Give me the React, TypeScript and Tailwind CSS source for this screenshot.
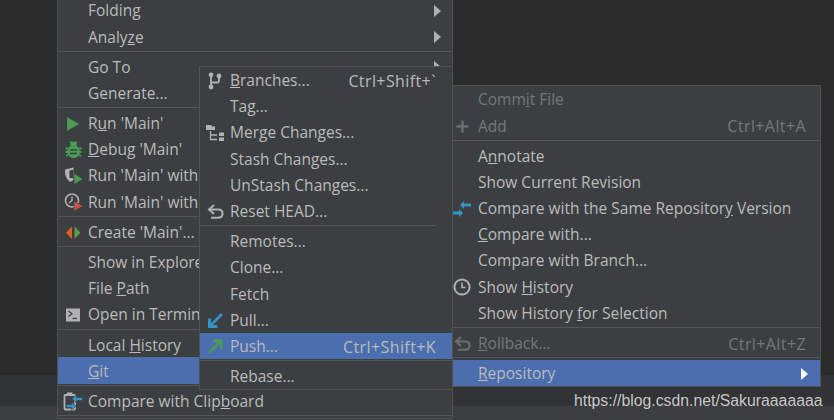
import React from 'react';

// Small inline icons, drawn to the sizes seen in the menus
const Svg = ({ children, w = 16, h = 16 }: { children: React.ReactNode; w?: number; h?: number }) => (
  <svg width={w} height={h} viewBox={`0 0 ${w} ${h}`} fill="none" className="shrink-0">
    {children}
  </svg>
);

const Play = () => (
  <Svg><path d="M2 1 L14 8 L2 15 Z" fill="#499c54" /></Svg>
);

const Bug = () => (
  <Svg w={17} h={18}>
    <ellipse cx="8.5" cy="10.5" rx="6" ry="6.8" fill="#499c54" />
    <circle cx="8.5" cy="3.5" r="3" fill="#499c54" />
    <path d="M5.5 0.5 L6.5 3 M11.5 0.5 L10.5 3 M0.5 7.5 H3 M14 7.5 H16.5 M0.5 11 H3 M14 11 H16.5 M1 15 L3.5 13.5 M16 15 L13.5 13.5" stroke="#499c54" strokeWidth="1.8" />
    <path d="M5 9 H12 M5 12.5 H12" stroke="#3c3f41" strokeWidth="1.4" />
  </Svg>
);

const Coverage = () => (
  <Svg w={19} h={18}>
    <path d="M1 2.5 L9.5 0.5 V13 L6 15 C3 12.5 1 9.5 1 5.5 Z" fill="#afb1b3" />
    <path d="M5.5 3.5 L9.5 2.8 V11 H5.5 Z" fill="#3c3f41" />
    <path d="M10 6.5 L19 12 L10 17.5 Z" fill="#499c54" stroke="#3c3f41" strokeWidth="0.6" />
  </Svg>
);

const Profiler = () => (
  <Svg w={19} h={18}>
    <circle cx="8" cy="7.5" r="6.5" stroke="#afb1b3" strokeWidth="1.6" />
    <path d="M8 3.5 V7.5 L5 10" stroke="#afb1b3" strokeWidth="1.4" />
    <path d="M10 8 L19 13 L10 18 Z" fill="#c75450" stroke="#3c3f41" strokeWidth="0.6" />
  </Svg>
);

const CreateMain = () => (
  <Svg>
    <path d="M7 1.5 V14 L1 7.8 Z" fill="#e05f25" />
    <path d="M9.5 1.5 V14 L15.5 7.8 Z" fill="#5aa146" />
  </Svg>
);

const Terminal = () => (
  <Svg>
    <rect x="1" y="1.5" width="14" height="13" fill="#afb1b3" />
    <path d="M3.5 4 L7 6.8 L3.5 9.5" stroke="#3c3f41" strokeWidth="1.2" />
    <path d="M7.5 11.5 H12" stroke="#3c3f41" strokeWidth="1.2" />
  </Svg>
);

const CompareBlue = () => (
  <Svg w={18} h={16}>
    <path d="M7 4 L11 0 V2.5 H18 V5.5 H11 V8 Z" fill="#3592c4" />
    <path d="M10 12 L6 8 V10.5 H0 V13.5 H6 V16 Z" fill="#3592c4" />
  </Svg>
);

const Clipboard = () => (
  <Svg w={20} h={19}>
    <rect x="1.5" y="3" width="10.5" height="14.5" rx="1" stroke="#afb1b3" strokeWidth="1.8" />
    <rect x="4" y="0.5" width="5.5" height="3.5" fill="#afb1b3" />
    <path d="M9 7 L13.5 3 V5.5 H19.5 V8.5 H13.5 V11 Z" fill="#3592c4" stroke="#3c3f41" strokeWidth="0.6" />
    <path d="M13 14 L8.5 10 V12.5 H3.5 V15.5 H8.5 V18.5 Z" fill="#3592c4" stroke="#3c3f41" strokeWidth="0.6" />
  </Svg>
);

const Branch = () => (
  <Svg w={14} h={18}>
    <circle cx="3" cy="2.8" r="2.4" fill="#afb1b3" />
    <circle cx="3" cy="15" r="2.4" fill="#afb1b3" />
    <circle cx="11" cy="4" r="2.4" fill="#afb1b3" />
    <path d="M3 3 V15 M3 10.5 H9.5 Q11 10.5 11 9 V5" stroke="#afb1b3" strokeWidth="1.8" />
  </Svg>
);

const Merge = () => (
  <Svg w={18} h={18}>
    <path d="M0 1 H5 L6 2.5 H9 V6 H0 Z" fill="#afb1b3" />
    <path d="M4.5 7 V15.5 H11 M4.5 11 H11" stroke="#afb1b3" strokeWidth="1.3" />
    <rect x="13" y="8.5" width="5" height="3.5" fill="#afb1b3" />
    <rect x="13" y="13.5" width="5" height="3.5" fill="#afb1b3" />
  </Svg>
);

const Undo = ({ color = '#afb1b3' }: { color?: string }) => (
  <Svg w={17} h={15}>
    <path d="M3 5.5 H11 Q15.5 5.5 15.5 9.5 Q15.5 13.8 11 13.8 H4" stroke={color} strokeWidth="2" />
    <path d="M7 1 L2 5.5 L7 10" stroke={color} strokeWidth="2" />
  </Svg>
);

const Pull = () => (
  <Svg w={15} h={15}>
    <path d="M14 1 L3 12" stroke="#3592c4" strokeWidth="2.6" />
    <path d="M1.5 5.5 V13.5 H9.5" stroke="#3592c4" strokeWidth="3" />
  </Svg>
);

const Push = () => (
  <Svg w={15} h={15}>
    <path d="M1 14 L12 3" stroke="#499c54" strokeWidth="2.6" />
    <path d="M5 1.8 H13.2 V10" stroke="#499c54" strokeWidth="2.6" />
  </Svg>
);

const Plus = () => (
  <Svg w={13} h={13}>
    <path d="M6.5 0.5 V12.5 M0.5 6.5 H12.5" stroke="#6e6e6e" strokeWidth="2.4" />
  </Svg>
);

const Clock = () => (
  <Svg w={18} h={18}>
    <circle cx="9" cy="9" r="7.6" stroke="#afb1b3" strokeWidth="2" />
    <path d="M9 4.5 V9.5 H12.5" stroke="#afb1b3" strokeWidth="1.6" />
  </Svg>
);

const Caret = ({ white }: { white?: boolean }) => (
  <span
    className={
      white
        ? 'ml-auto mr-[12px] h-0 w-0 border-y-[6px] border-l-[7px] border-y-transparent border-l-white'
        : 'ml-auto mr-[11px] h-0 w-0 border-y-[6px] border-l-[7px] border-y-transparent border-l-[#afb1b3]'
    }
  />
);

type RowProps = {
  children: React.ReactNode;
  icon?: React.ReactNode;
  shortcut?: string;
  active?: boolean;
  disabled?: boolean;
  caret?: boolean;
  slot: string;
};

const Row = ({ children, icon, shortcut, active, disabled, caret, slot }: RowProps) => (
  <div
    className={`flex h-[26.2px] shrink-0 items-center whitespace-nowrap pt-[2px] ${active ? 'bg-[#4b6eaf]' : ''} ${
      disabled ? 'text-[#777777]' : 'text-[#bbbbbb]'
    }`}
  >
    <span className={`flex shrink-0 items-center justify-center ${slot}`}>{icon}</span>
    <span>{children}</span>
    {shortcut && <span className="ml-auto text-[16px] tracking-[0.4px]">{shortcut}</span>}
    {caret && <Caret white={active} />}
  </div>
);

const Sep = () => (
  <div className="flex h-[4px] shrink-0 items-center">
    <div className="h-px w-full bg-[#525455]" />
  </div>
);

const menuBase =
  'absolute z-10 flex flex-col border bg-[#3c3f41] border-[#515151] text-[15.5px] leading-none [font-family:"Open_Sans",sans-serif]';

const MainMenu = () => {
  const slot = 'w-[30px]';
  return (
    <div className={`${menuBase} left-[57px] top-[-4px] w-[396px]`}>
      <Row slot={slot} caret>Folding</Row>
      <Row slot={slot} caret>Analy<u>z</u>e</Row>
      <Sep />
      <Row slot={slot} caret>Go To</Row>
      <Row slot={slot}>Generate...</Row>
      <Sep />
      <Row slot={slot} icon={<Play />}>R<u>u</u>n 'Main'</Row>
      <Row slot={slot} icon={<Bug />}><u>D</u>ebug 'Main'</Row>
      <Row slot={slot} icon={<Coverage />}>Run 'Main' with Coverage</Row>
      <Row slot={slot} icon={<Profiler />}>Run 'Main' with Profiler</Row>
      <Sep />
      <Row slot={slot} icon={<CreateMain />}>Create 'Main'...</Row>
      <Sep />
      <Row slot={slot}>Show in Explorer</Row>
      <Row slot={slot}>File <u>P</u>ath</Row>
      <Row slot={slot} icon={<Terminal />}>Open in Terminal</Row>
      <Sep />
      <Row slot={slot}>Local <u>H</u>istory</Row>
      <Row slot={slot} active><u>G</u>it</Row>
      <Sep />
      <Row slot={slot} icon={<Clipboard />}>Compare with Clip<u>b</u>oard</Row>
      <Sep />
    </div>
  );
};

const GitMenu = () => {
  const slot = 'w-[30px]';
  return (
    <div className={`${menuBase} left-[199px] top-[65.7px] z-20 w-[254px] [&>div]:pr-[16px]`}>
      <Row slot={slot} icon={<Branch />} shortcut="Ctrl+Shift+`"><u>B</u>ranches...</Row>
      <Row slot={slot}>Tag...</Row>
      <Row slot={slot} icon={<Merge />}>Merge Changes...</Row>
      <Row slot={slot}>Stash Changes...</Row>
      <Row slot={slot}>UnStash Changes...</Row>
      <Row slot={slot} icon={<Undo />}>Reset HEAD...</Row>
      <Sep />
      <Row slot={slot}>Remotes...</Row>
      <Row slot={slot}>Clone...</Row>
      <Row slot={slot}>Fetch</Row>
      <Row slot={slot} icon={<Pull />}>Pull...</Row>
      <Row slot={slot} icon={<Push />} shortcut="Ctrl+Shift+K" active>Push...</Row>
      <div className="!pr-0"><Sep /></div>
      <Row slot={slot}>Rebase...</Row>
    </div>
  );
};

const RepoMenu = () => {
  const slot = 'w-[25px] pr-[7px]';
  return (
    <div className={`${menuBase} left-[452px] top-[85px] z-30 w-[369px]`}>
      <Row slot={slot} disabled>Comm<u>i</u>t File</Row>
      <div className="pr-[14px]"><Row slot={slot} icon={<Plus />} shortcut="Ctrl+Alt+A" disabled>Add</Row></div>
      <Sep />
      <Row slot={slot}>A<u>n</u>notate</Row>
      <Row slot={slot}>Show Current Revision</Row>
      <Row slot={slot} icon={<CompareBlue />}>Compare with the Same Repositor<u>y</u> Version</Row>
      <Row slot={slot}><u>C</u>ompare with...</Row>
      <Row slot={slot}>Compare with Branch...</Row>
      <Row slot={slot} icon={<Clock />}>Show <u>H</u>istory</Row>
      <Row slot={slot}>Show History <u>f</u>or Selection</Row>
      <Sep />
      <div className="pr-[14px]"><Row slot={slot} icon={<Undo color="#6e6e6e" />} shortcut="Ctrl+Alt+Z" disabled><u>R</u>ollback...</Row></div>
      <Sep />
      <Row slot={slot} active caret><u>R</u>epository</Row>
    </div>
  );
};

export default function App() {
  return (
    <div className="relative flex h-[420px] w-[834px] flex-col overflow-hidden bg-[#2b2b2b]">
      <div className="h-[375px] shrink-0" />
      <div className="h-[31px] shrink-0 border-t border-[#323232] bg-[#313335]" />
      <div className="flex-1 bg-[#3c3f41]" />
      <MainMenu />
      <GitMenu />
      <RepoMenu />
      <span className="absolute left-[574px] top-[392px] z-40 text-[15.8px] leading-[18px] text-[#c8c8c8] [font-family:'Liberation_Sans',sans-serif]">
        https://blog.csdn.net/Sakuraaaaaaa
      </span>
    </div>
  );
}
